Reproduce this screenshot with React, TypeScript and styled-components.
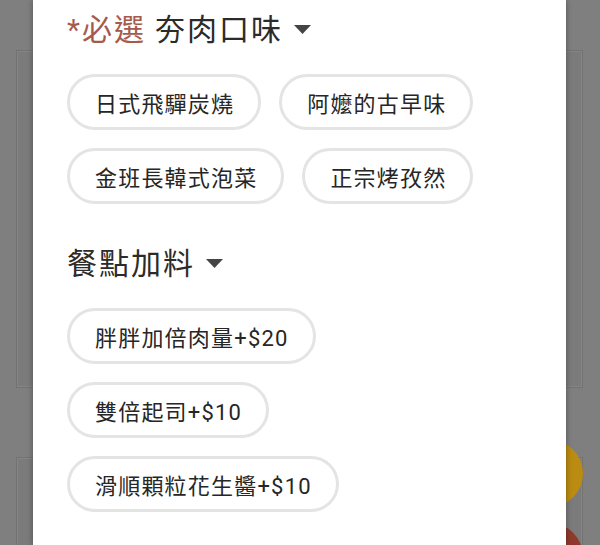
import React from "react";
import styled, { createGlobalStyle } from "styled-components";

const GlobalStyle = createGlobalStyle`
  html, body { margin: 0; padding: 0; }
  body {
    font-family: Roboto, "Noto Sans CJK TC", "Noto Sans", sans-serif;
    background: #7f7f7f;
  }
  * { box-sizing: border-box; }
`;

const Screen = styled.div`
  position: relative;
  width: 600px;
  height: 545px;
  overflow: hidden;
  background: #7f7f7f;
`;

const BackPage = styled.div`
  display: flex;
  flex-direction: column;
  gap: 69px;
  padding: 50px 17px 0 16px;
`;

const BackCard = styled.div<{ $h: number }>`
  height: ${(p) => p.$h}px;
  background: #7b7b7b;
  border: 1px solid #727272;
  box-shadow: inset 0 0 0 1px #858585;
`;

const Fab = styled.div<{ $top: number; $color: string }>`
  position: absolute;
  left: 516px;
  top: ${(p) => p.$top}px;
  width: 67px;
  height: 67px;
  border-radius: 50%;
  background: ${(p) => p.$color};
`;

const Sheet = styled.div`
  position: absolute;
  top: 0;
  bottom: 0;
  left: 33px;
  right: 34px;
  background: #ffffff;
  box-shadow: 0 0 6px rgba(0, 0, 0, 0.35);
  padding: 12px 34px 0 34px;
  display: flex;
  flex-direction: column;
  gap: 42px;
`;

const Section = styled.section`
  display: flex;
  flex-direction: column;
  gap: 26px;
`;

const Heading = styled.div`
  display: flex;
  align-items: center;
  height: 36px;
  font-family: Roboto, "Noto Sans CJK TC", sans-serif;
  font-size: 30px;
  font-weight: 400;
  line-height: 36px;
  letter-spacing: 2px;
  color: #2b2b2b;
  white-space: nowrap;
`;

const Required = styled.span`
  color: #a65a4c;
  margin-right: 9px;
`;

const Caret = styled.svg`
  margin-left: 11px;
  margin-top: -2px;
  flex: none;
`;

const ChipList = styled.div<{ $stacked?: boolean }>`
  display: flex;
  flex-direction: ${(p) => (p.$stacked ? "column" : "row")};
  flex-wrap: wrap;
  align-items: flex-start;
  gap: 18px;
`;

const Chip = styled.button`
  display: inline-flex;
  align-items: center;
  height: 56px;
  padding: 0 24px 0 25px;
  border: 3px solid #e4e4e4;
  border-radius: 28px;
  background: #ffffff;
  font-family: Roboto, "Noto Sans CJK TC", "Noto Sans", sans-serif;
  font-size: 22px;
  font-weight: 400;
  letter-spacing: 1.2px;
  color: #262626;
  white-space: nowrap;
  cursor: pointer;
`;

const CaretIcon = () => (
  <Caret width="17" height="9" viewBox="0 0 17 9">
    <path d="M0 0 L17 0 L8.5 9 Z" fill="#444444" />
  </Caret>
);

const flavors = ["日式飛驒炭燒", "阿嬤的古早味", "金班長韓式泡菜", "正宗烤孜然"];
const extras = ["胖胖加倍肉量+$20", "雙倍起司+$10", "滑順顆粒花生醬+$10"];

export default function App() {
  return (
    <>
      <GlobalStyle />
      <Screen>
        <BackPage>
          <BackCard $h={338} />
          <BackCard $h={200} />
        </BackPage>
        <Fab $top={440} $color="#bb8c12" />
        <Fab $top={523} $color="#8f3a2c" />
        <Sheet>
          <Section>
            <Heading>
              <Required>*必選</Required>
              夯肉口味
              <CaretIcon />
            </Heading>
            <ChipList>
              {flavors.map((f) => (
                <Chip key={f}>{f}</Chip>
              ))}
            </ChipList>
          </Section>
          <Section>
            <Heading>
              餐點加料
              <CaretIcon />
            </Heading>
            <ChipList $stacked>
              {extras.map((e) => (
                <Chip key={e}>{e}</Chip>
              ))}
            </ChipList>
          </Section>
        </Sheet>
      </Screen>
    </>
  );
}
